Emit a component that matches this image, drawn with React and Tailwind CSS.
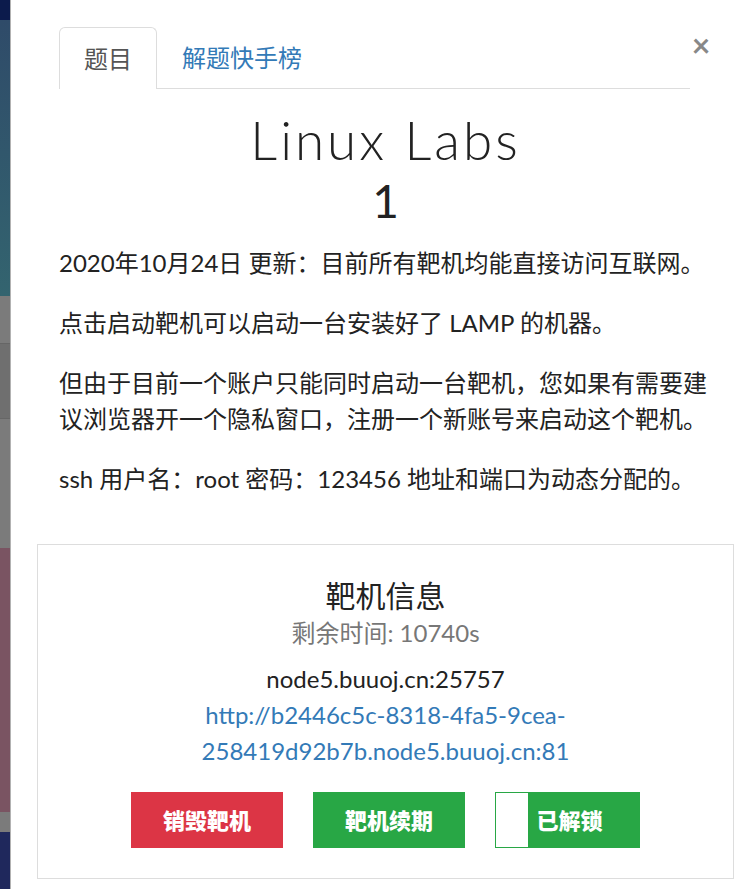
import React from 'react';

const strip = [
  'h-[20px] bg-[#0c1b4c]',
  'h-[276px] bg-gradient-to-b from-[#2f4b69] to-[#33646f]',
  'h-[48px] bg-[#7b7b7b] border-b border-[#666]',
  'h-[75px] bg-[#6f6f6f] border-b border-[#666]',
  'h-[129px] bg-[#7b7b7b]',
  'h-[264px] bg-[#7a5462]',
  'h-[20px] bg-[#7b7b7b]',
  'flex-1 bg-[#1f285c]',
];

const App = () => {
  return (
    <div className="flex min-h-[889px] w-[740px] font-['Lato','Noto_Sans_CJK_SC',sans-serif] text-[#222]">
      {/* 背景 */}
      <div className="flex w-[11px] shrink-0 flex-col border-r border-black/30">
        {strip.map((c, i) => (
          <div key={i} className={c}></div>
        ))}
      </div>

      {/* 弹窗 */}
      <div className="flex-1 bg-white pl-[48px] pr-[28px] pt-[27px] pb-[5px]">
        <div className="flex">
          <ul className="flex flex-1 border-b border-[#ddd]">
            <li className="-mb-px flex h-[62px] items-center rounded-t-[6px] border border-b-0 border-[#ddd] bg-white px-[24px] text-[24px] text-[#555]">
              题目
            </li>
            <li className="ml-[2px] flex h-[61px] items-center px-[23px] text-[24px] text-[#337ab7]">
              解题快手榜
            </li>
          </ul>
          <button className="-mt-[2px] h-[40px] w-[22px] text-[32px] font-bold leading-none text-[#888]">
            ×
          </button>
        </div>

        <h1 className="mt-[20px] text-center text-[53px] font-light leading-[62px] tracking-[3px] text-[#222]">
          Linux Labs
        </h1>
        <h2 className="mt-[4px] text-center text-[46px] leading-[52px] text-[#222]">1</h2>

        <div className="mt-[18px] text-[24px] leading-[36px] text-[#222]">
          <p className="mb-[24px]">2020年10月24日 更新：目前所有靶机均能直接访问互联网。</p>
          <p className="mb-[24px]">点击启动靶机可以启动一台安装好了 LAMP 的机器。</p>
          <p className="mb-[24px]">
            但由于目前一个账户只能同时启动一台靶机，您如果有需要建议浏览器开一个隐私窗口，注册一个新账号来启动这个靶机。
          </p>
          <p>ssh 用户名：root 密码：123456 地址和端口为动态分配的。</p>
        </div>

        <div className="mx-[-22px] mt-[47px] border border-[#ddd] pt-[30px] pb-[30px] text-center">
          <h4 className="text-[30px] leading-[40px] text-[#222]">靶机信息</h4>
          <p className="text-[24px] leading-[36px] text-[#777]">剩余时间: 10740s</p>
          <p className="mt-[10px] text-[24px] leading-[36px] text-[#222]">node5.buuoj.cn:25757</p>
          <a className="block text-[24px] leading-[36px] text-[#337ab7]">
            http://b2446c5c-8318-4fa5-9cea-
            <br />
            258419d92b7b.node5.buuoj.cn:81
          </a>
          <div className="mt-[23px] flex justify-center gap-[30px]">
            <button className="h-[56px] w-[152px] bg-[#dc3545] text-[22px] font-black text-white">
              销毁靶机
            </button>
            <button className="h-[56px] w-[152px] bg-[#28a745] text-[22px] font-black text-white">
              靶机续期
            </button>
            <button className="flex h-[56px] w-[145px] border border-[#28a745] bg-[#28a745]">
              <span className="h-full w-[32px] bg-white"></span>
              <span className="flex flex-1 items-center justify-center pr-[28px] text-[22px] font-black text-white">
                已解锁
              </span>
            </button>
          </div>
        </div>
      </div>
    </div>
  );
};

export default App;
